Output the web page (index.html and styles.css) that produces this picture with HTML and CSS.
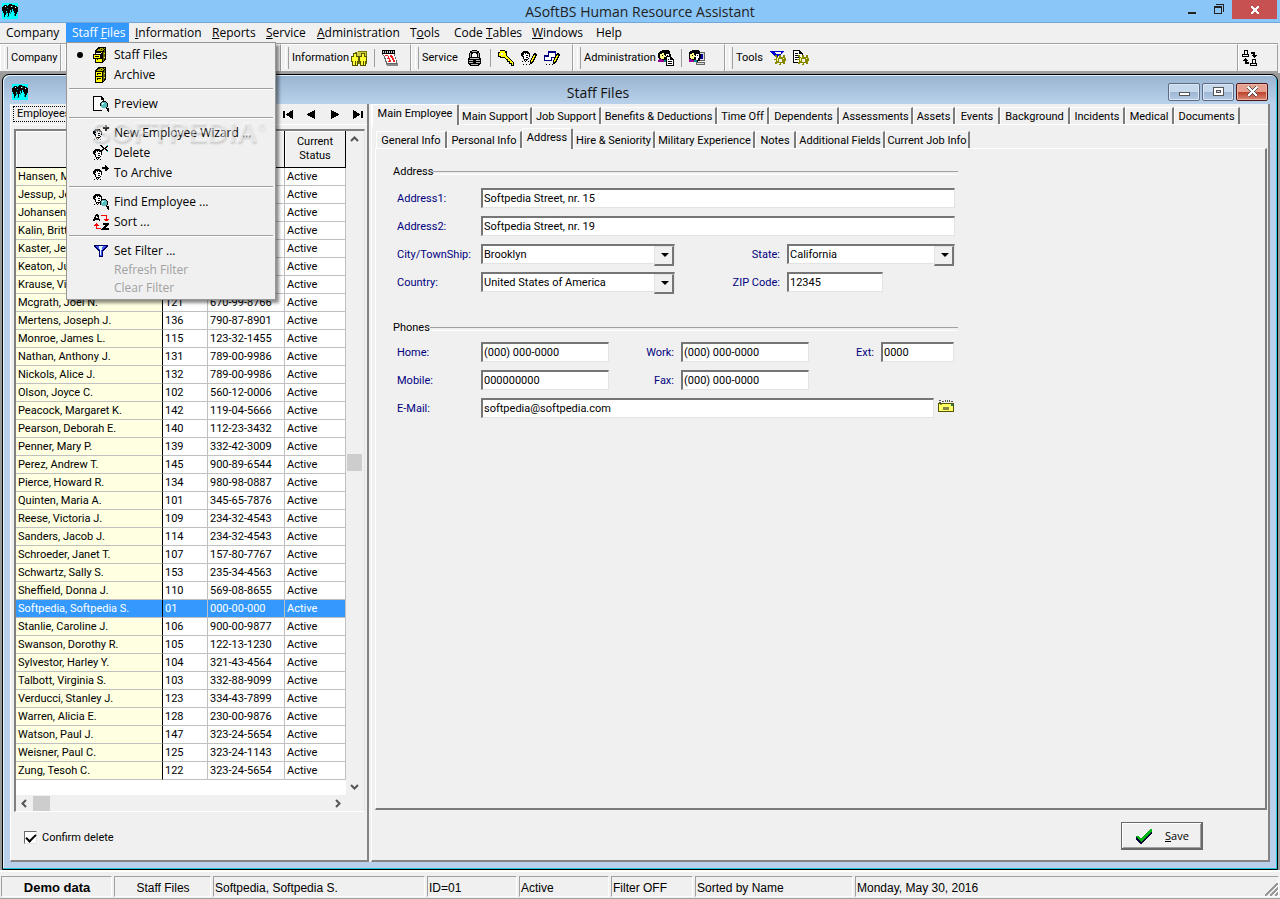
FILE: index.html
```html
<!DOCTYPE html>
<html lang="en">
<head>
<meta charset="utf-8">
<title>ASoftBS Human Resource Assistant</title>
<link rel="stylesheet" href="styles.css">
</head>
<body>
<svg class="defs" aria-hidden="true">
  <symbol id="i-people" viewBox="0 0 16 16"><path fill="#0ff" d="M0 0h16v16H0z"/><path d="M1 3h1V2h3v1h1V2h1V1h3v1h3v1h2v1h1v5h-1v2h-1v2h-1v-3h-1V8h-1V6h-1v3H9V7H8v3H7v3H6v-3H5V8H4v4H3v2H2v-4H1V8H0V4h1z"/><path fill="#088" d="M5 13h2v1H5zM4 9h1v2H4zM12 11h1v2h-1zM8 9h1v2H8zM10 3h1v1h-1zM5 5h1v1H5z"/><path fill="#fff" d="M3 3h1v1H3zM9 3h1v1H9zM13 4h1v1h-1z"/></symbol>
  <symbol id="i-cabinet" viewBox="0 0 16 16"><path d="M2 4l3-4h8v12l-3 4H2z"/><path fill="#ff0" d="M3 5h6v10H3z"/><path fill="#aa0" d="M4 3h1V2h1V1h6v1h-1v1h-1v1H4z"/><path fill="#660" d="M10 5h1V3h1v9h-1v2h-1z"/><path fill="#000" d="M6 1h1v1H6zM8 2h1v1H8zM10 1h1v1h-1zM3 9h6v1H3zM4 6h4v1H4zM4 6h1v2H4zM4 11h4v1H4zM4 11h1v2H4z"/><path fill="#ff0" d="M11 6h1v1h-1zM11 10h1v1h-1z"/></symbol>
  <symbol id="i-cabinet-open" viewBox="0 0 16 16"><use href="#i-cabinet"/><path d="M0 7h2V5h6v1h1v6H0z"/><path fill="#ff0" d="M1 8h6v3H1z"/><path fill="#fff" d="M3 6h5v1H3z"/><path d="M2 9h4v1H2z"/></symbol>
  <symbol id="i-lens" viewBox="0 0 16 16"><path d="M9 5h4v1h1v1h1v4h-1v1h2v2h-2v-1h-1v-1H9v-1H8v-1H7V7h1V6h1z"/><path fill="#5bb" d="M9 6h4v1h1v4h-1v1H9v-1H8V7h1z"/><path fill="#cff" d="M9 7h2v1h-1v1H9z"/><path d="M14 13h1v1h1v2h-1v-1h-1z"/></symbol>
  <symbol id="i-preview" viewBox="0 0 16 16"><path d="M0 0h9v1h1v1h1v3h-1V4H8V1H1v13h8v1H0z"/><path fill="#fff" d="M1 1h7v3h2v3H1zM1 7h6v7H1z"/><use href="#i-lens"/></symbol>
  <symbol id="i-head" viewBox="0 0 16 16"><path fill="#fff" d="M3 6h5v6H3z"/><path d="M2 4h5v1H2zM1 5h7v1H1zM0 6h3v1H0zM4 6h1v1H4zM6 6h3v1H6zM0 7h3v1H0zM8 7h1v2H8zM0 8h2v1H0zM5 8h2v1H5zM1 9h2v1H1zM8 9h1v1H8zM2 10h1v2H2zM5 10h2v1H5zM7 11h1v1H7zM3 12h4v1H3zM3 13h1v1H3zM5 13h1v1H5zM1 14h1v1H1zM4 14h1v1H4zM7 14h1v1H7z"/></symbol>
  <symbol id="i-new" viewBox="0 0 16 16"><use href="#i-head"/><path fill="#333" d="M12 0h2v2h2v2h-2v2h-2V4h-2V2h2z"/></symbol>
  <symbol id="i-delete" viewBox="0 0 16 16"><use href="#i-head"/><path d="M7 0h2v1h1v1h1v1h1V2h1V1h2v1h-1v1h-1v1h1v1h1v1h-2V5h-1V4h-1v1h-1v1H8V5h1V4h1V3H9V2H8V1H7z"/><path fill="#0cc" d="M14 0h1v1h-1zM14 6h1v1h-1z"/></symbol>
  <symbol id="i-move" viewBox="0 0 16 16"><use href="#i-head"/><path d="M9 2h3V0h1v1h1v1h1v1h1v1h-1v1h-1v1h-2V4H9z"/></symbol>
  <symbol id="i-find" viewBox="0 0 16 16"><use href="#i-head" y="-4"/><use href="#i-lens"/></symbol>
  <symbol id="i-sort" viewBox="0 0 16 16"><path fill="none" stroke="#000" stroke-width="1.5" d="M.5 7L3.500.5h1L6.500 7M1 5h5M10 10h5l-5 5h6"/><path fill="none" stroke="red" d="M8 1.500h5.500V7M11 5h5M12 6h3M8 14.500H3.500V9M1 11h5M2 10h3"/></symbol>
  <symbol id="i-funnel" viewBox="0 0 16 16"><path fill="#000060" d="M1 2h14v2h-1v1h-1v1h-1v1h-1v1h-1v6H6V8H5V7H4V6H3V5H2V4H1z"/><path fill="#45f" d="M3 3h10v1h-1v1h-1v1h-1v1H9v6H7V7H6V6H5V5H4V4H3z"/><path fill="#dff" d="M6 3h4v1H9v3H8v5H7V6H6z"/></symbol>
  <symbol id="i-gear" viewBox="0 0 16 16"><path fill="#880" d="M9 5h2v2h2V5h2v3h1v3h-1v3h-2v-1h-2v2H9v-2H7v1H5v-2h1v-2H4V9h2V7H5V5h2v2h2z"/><path fill="#ff8" d="M8 7h1v1H8zM7 8h1v3H7zM9 13h1v1H9zM13 8h1v1h-1z"/><path fill="#eee" d="M9 9h3v3H9z"/></symbol>
  <symbol id="i-filtergear" viewBox="0 0 16 16"><path fill="#00c" d="M0 1h14v1h-1v1h-1v1h-1v2H8v2H6V6H4V5H3V4H2V3H1V2H0z"/><path fill="#fff" d="M5 2h6v2H6z"/><use href="#i-gear"/></symbol>
  <symbol id="i-docgear" viewBox="0 0 16 16"><path d="M0 0h7v1h1v1h1v1h1v10H0z"/><path fill="#fff" d="M1 1h5v3h3v8H1z"/><path d="M2 3h3v1H2zM2 5h5v1H2zM2 7h5v1H2zM2 9h5v1H2z"/><use href="#i-gear"/></symbol>
  <symbol id="i-group" viewBox="0 0 16 16"><path fill="#770" d="M4 2h3V1h9v13H6V8H4z"/><path fill="#cc4" d="M6 2h9v8H6z"/><path fill="#550" d="M2 3h4v3h2v6H7v4H1v-4H0V6h2zM10 3h4v3h2v6h-1v4H9v-4H8V6h2z"/><path fill="#ff3" d="M3 4h2v3h2v4H6v4H5v-4H4v4H2v-4H1V7h2zM11 4h2v3h2v4h-1v4h-1v-4h-1v4h-2v-4H9V7h2z"/></symbol>
  <symbol id="i-cal" viewBox="0 0 16 16"><path fill="#888" d="M4 13h12v3H5v-1H4z"/><path d="M0 0h13v4H0z"/><path fill="#666" d="M0 4h13v3h1v3h1v4H4v-2H3V9H2V6H1V5H0z"/><path fill="#fff" d="M1 4h11v2h1v3h1v4H5v-2H4V8H3V6H2V5H1z"/><path fill="#ccc" d="M1 1h1v2H1zM3 1h1v2H3zM5 1h1v2H5zM7 1h1v2H7zM9 1h1v2H9zM11 1h1v2h-1z"/><path fill="#e22" d="M3 5h3v1h1v2h1v2h1v2H6v-1h1V9H5V8h1V6H3zM8 5h2v1h1v2h1v2h1v2h-2v-2h-1V8H9V7H8z"/></symbol>
  <symbol id="i-lock" viewBox="0 0 16 16"><path fill-rule="evenodd" d="M5 0h5v1h2v2h1v4H2V3h1V1h2zM6 3v1H5v3h5V4H9V3z"/><path fill="#aaa" d="M5 1h5v1H5zM3 3h1v4H3zM11 3h1v4h-1z"/><path d="M2 7h11v1h1v6h-1v1h-1v1H3v-1H2v-1H1V8h1z"/><path fill="#bbb" d="M3 8h9v1H3zM2 10h4v1H2zM9 10h4v1H9zM2 12h4v1H2zM9 12h4v1H9zM4 14h7v1H4z"/></symbol>
  <symbol id="i-key" viewBox="0 0 16 16"><path d="M2 0h5v1h2v5l7 7v3h-3v-2h-2v-2H9v-2H8L6 8H2V7H0V2h2z"/><path fill="#ff0" d="M2 1h5v2h1v3l7 7v2h-1v-2h-2v-2h-2V9H8L6 7H3V6H1V3h1z"/><path fill="#eee" d="M3 3h2v2H3z"/></symbol>
  <symbol id="i-pen" viewBox="0 0 16 16"><path d="M13 3h2v1h1v2h-1v2h-1v2h-1v2h-1v1h-1v1H9v-4h1V8h1V6h1V4h1z"/><path fill="#ff0" d="M13 5h1v2h-1v2h-1v2h-1v1h-1v-2h1V8h1V6h1z"/><path d="M2 14h1v1H2zM5 14h1v1H5zM8 14h1v1H8z"/></symbol>
  <symbol id="i-headpen" viewBox="0 0 16 16"><use href="#i-head" y="-3"/><use href="#i-pen"/></symbol>
  <symbol id="i-winpen" viewBox="0 0 16 16"><path fill="#000080" d="M4 1h8v7H4zM0 5h8v6H0z"/><path fill="#fff" d="M5 3h6v4H5zM1 7h6v3H1z"/><use href="#i-pen"/></symbol>
  <symbol id="i-faces" viewBox="0 0 16 16"><path d="M2 1h2V0h7v1h1v3h1v4h-1v3h-2v1H1v-2h1V9H1V8H0V3h1V2h1z"/><path fill="#ff8" d="M2 4h2V3h2v2h1v2H6v2H3V8H2z"/><path d="M4 5h1v1H4z"/><path fill="#fff" d="M8 4h3v4h-1v2H8V7H7V6h1z"/><path d="M9 5h1v1H9z"/><path fill="#909" d="M1 9h3v1h2v2H0v-2h1z"/><path fill="#088" d="M6 10h3v2H6z"/></symbol>
  <symbol id="i-facesdoc" viewBox="0 0 16 16"><use href="#i-faces"/><path d="M8 6h5v1h1v1h1v1h1v7H8z"/><path fill="#fff" d="M9 7h3v3h3v5H9z"/><path d="M10 9h1v1h-1zM10 11h4v1h-4zM10 13h4v1h-4z"/></symbol>
  <symbol id="i-facespc" viewBox="0 0 16 16"><path fill="#666" d="M8 2h8v9H8zM7 12h9v3H7z"/><path fill="#ddd" d="M9 3h6v7H9zM8 13h7v1H8z"/><path fill="#009" d="M11 4h3v5h-3z"/><use href="#i-faces" x="-1"/></symbol>
  <symbol id="i-swap" viewBox="0 0 16 16"><path fill-rule="evenodd" d="M2 0h4v4h1v3H0V4h2zM3 1v3h2V1zM1 5v1h5V5zM10 9h4v4h1v3H8v-3h2zM11 10v3h2v-3zM9 14v1h5v-1z"/><path d="M9 2h4v3h2v1h-1v1h-1v1h-1V7h-1V6h-1V5h1V4H9zM3 8h1v1h1v1h1v1H5v1h2v2H3v-3H1v-1h1V9h1z"/></symbol>
  <symbol id="i-mail" viewBox="0 0 16 12"><path d="M1 0h2v1H1zM4 1h2v1H4zM7 0h1v2H7zM9 0h1v2H9zM11 0h1v2h-1zM13 1h2v1h-2zM1 2h2v1H1z" fill="#555"/><path fill="#550" d="M0 3h16v9H0z"/><path fill="#ff6" d="M1 4h14v7H1z"/><path fill="#884" d="M5 7h6v3H5zM2 4h2v1H2z"/><path fill="#276" d="M13 4h2v2h-2z"/></symbol>
  <symbol id="i-check" viewBox="0 0 16 16"><path fill="#003" d="M16 3v2L6 16H4L0 11V9l5 4z"/><path fill="#00b414" d="M0 8h2l3 3L14 1h2v2L5 14 0 9z"/></symbol>
</svg>

<div class="app">
  <header class="titlebar">
    <svg class="icon"><use href="#i-people"/></svg>
    <h1 class="title">ASoftBS Human Resource Assistant</h1>
    <div class="win-buttons">
      <button class="win-btn" aria-label="Minimize"><svg width="10" height="12" viewBox="0 0 10 12"><path fill="#222" d="M1 9h8v2H1z"/></svg></button>
      <button class="win-btn" aria-label="Restore"><svg width="10" height="12" viewBox="0 0 10 12"><path fill="#222" fill-rule="evenodd" d="M2 1h8v8H9V2H2zM0 3h8v8H0zM1 5v5h6V5z"/></svg></button>
      <button class="win-btn win-close" aria-label="Close"><svg width="8" height="8" viewBox="0 0 8 8"><path stroke="#fff" stroke-width="2" d="M0 0l8 8M8 0L0 8"/></svg></button>
    </div>
  </header>

  <nav class="menubar">
    <button>Company</button><button class="open">Staff <u>F</u>iles</button><button><u>I</u>nformation</button><button><u>R</u>eports</button><button><u>S</u>ervice</button><button><u>A</u>dministration</button><button>T<u>o</u>ols</button><button>Code <u>T</u>ables</button><button><u>W</u>indows</button><button>Help</button>
    <div class="menu">
      <button class="item"><i class="bullet"></i><svg class="icon"><use href="#i-cabinet-open"/></svg>Staff Files</button>
      <button class="item"><i></i><svg class="icon"><use href="#i-cabinet"/></svg>Archive</button>
      <hr>
      <button class="item"><i></i><svg class="icon"><use href="#i-preview"/></svg>Preview</button>
      <hr>
      <button class="item"><i></i><svg class="icon"><use href="#i-new"/></svg>New Employee Wizard ...</button>
      <button class="item"><i></i><svg class="icon"><use href="#i-delete"/></svg>Delete</button>
      <button class="item"><i></i><svg class="icon"><use href="#i-move"/></svg>To Archive</button>
      <hr>
      <button class="item"><i></i><svg class="icon"><use href="#i-find"/></svg>Find Employee ...</button>
      <button class="item"><i></i><svg class="icon"><use href="#i-sort"/></svg>Sort ...</button>
      <hr>
      <button class="item"><i></i><svg class="icon"><use href="#i-funnel"/></svg>Set Filter ...</button>
      <button class="item plain" disabled>Refresh Filter</button>
      <button class="item plain" disabled>Clear Filter</button>
      <div class="watermark">SOFTPEDIA<sup>®</sup></div>
    </div>
  </nav>

  <div class="toolbar">
    <div class="group g-company"><span>Company</span></div>
    <div class="group g-staff"></div>
    <div class="group g-info"><span>Information</span>
      <button class="tool" aria-label="Employee information"><svg class="icon"><use href="#i-group"/></svg></button><b class="sep"></b>
      <button class="tool" aria-label="Calendar"><svg class="icon"><use href="#i-cal"/></svg></button></div>
    <div class="group g-service"><span>Service</span>
      <button class="tool" aria-label="Lock"><svg class="icon"><use href="#i-lock"/></svg></button><b class="sep"></b>
      <button class="tool" aria-label="Password"><svg class="icon"><use href="#i-key"/></svg></button>
      <button class="tool" aria-label="Edit employee"><svg class="icon"><use href="#i-headpen"/></svg></button>
      <button class="tool" aria-label="Edit windows"><svg class="icon"><use href="#i-winpen"/></svg></button></div>
    <div class="group g-admin"><span>Administration</span>
      <button class="tool" aria-label="User records"><svg class="icon"><use href="#i-facesdoc"/></svg></button><b class="sep"></b>
      <button class="tool" aria-label="User sessions"><svg class="icon"><use href="#i-facespc"/></svg></button></div>
    <div class="group g-tools"><span>Tools</span>
      <button class="tool" aria-label="Filter setup"><svg class="icon"><use href="#i-filtergear"/></svg></button>
      <button class="tool" aria-label="Report setup"><svg class="icon"><use href="#i-docgear"/></svg></button></div>
    <div class="g-last"><button class="tool" aria-label="Switch"><svg class="icon"><use href="#i-swap"/></svg></button></div>
  </div>

  <main class="mdi">
    <section class="child">
      <header class="child-title">
        <svg class="icon"><use href="#i-people"/></svg>
        <h2 class="title">Staff Files</h2>
        <div class="child-buttons">
          <button class="cbtn" aria-label="Minimize window"><svg width="13" height="13" viewBox="0 0 13 13"><path fill="#fff" stroke="#555" d="M1.500 7.500h10v3h-10z"/></svg></button>
          <button class="cbtn" aria-label="Maximize window"><svg width="13" height="13" viewBox="0 0 13 13"><path fill="#fff" stroke="#555" fill-rule="evenodd" d="M1.500 2.500h10v8h-10zM4.500 5.500v2h4v-2z"/></svg></button>
          <button class="cbtn cclose" aria-label="Close window"><svg width="13" height="13" viewBox="0 0 13 13"><path stroke="#555" stroke-width="4" d="M2 2l9 9M11 2l-9 9"/><path stroke="#fff" stroke-width="2" d="M2 2l9 9M11 2l-9 9"/></svg></button>
        </div>
      </header>

      <div class="client">
        <section class="left">
          <div class="left-head">
            <button class="emp-tab">Employees</button>
            <div class="navs">
              <button aria-label="First"><svg width="11" height="9" viewBox="0 0 11 9"><path d="M0 1h2v7H0zM10 0v9L3 5V4z"/></svg></button>
              <button aria-label="Previous"><svg width="9" height="9" viewBox="0 0 9 9"><path d="M8 0v9L0 5V4z"/></svg></button>
              <button aria-label="Next"><svg width="9" height="9" viewBox="0 0 9 9"><path d="M1 0v9l8-4V4z"/></svg></button>
              <button aria-label="Last"><svg width="11" height="9" viewBox="0 0 11 9"><path d="M9 1h2v7H9zM1 0v9l7-4V4z"/></svg></button>
            </div>
          </div>
          <div class="left-page">
            <div class="grid-box">
              <div class="grid-view">
                <table class="emps">
                  <colgroup><col class="c-name"><col class="c-id"><col class="c-ssn"><col class="c-status"></colgroup>
                  <thead><tr><th></th><th></th><th></th><th>Current Status</th></tr></thead>
                  <tbody>
                    <tr><td>Hansen, M</td><td></td><td></td><td>Active</td></tr>
                    <tr><td>Jessup, Je</td><td></td><td></td><td>Active</td></tr>
                    <tr><td>Johansen,</td><td></td><td></td><td>Active</td></tr>
                    <tr><td>Kalin, Britta</td><td></td><td></td><td>Active</td></tr>
                    <tr><td>Kaster, Jer</td><td></td><td></td><td>Active</td></tr>
                    <tr><td>Keaton, Ju</td><td></td><td></td><td>Active</td></tr>
                    <tr><td>Krause, Vi</td><td></td><td></td><td>Active</td></tr>
                    <tr><td>Mcgrath, Joel N.</td><td>121</td><td>670-99-8766</td><td>Active</td></tr>
                    <tr><td>Mertens, Joseph J.</td><td>136</td><td>790-87-8901</td><td>Active</td></tr>
                    <tr><td>Monroe, James L.</td><td>115</td><td>123-32-1455</td><td>Active</td></tr>
                    <tr><td>Nathan, Anthony J.</td><td>131</td><td>789-00-9986</td><td>Active</td></tr>
                    <tr><td>Nickols, Alice J.</td><td>132</td><td>789-00-9986</td><td>Active</td></tr>
                    <tr><td>Olson, Joyce C.</td><td>102</td><td>560-12-0006</td><td>Active</td></tr>
                    <tr><td>Peacock, Margaret K.</td><td>142</td><td>119-04-5666</td><td>Active</td></tr>
                    <tr><td>Pearson, Deborah E.</td><td>140</td><td>112-23-3432</td><td>Active</td></tr>
                    <tr><td>Penner, Mary P.</td><td>139</td><td>332-42-3009</td><td>Active</td></tr>
                    <tr><td>Perez, Andrew T.</td><td>145</td><td>900-89-6544</td><td>Active</td></tr>
                    <tr><td>Pierce, Howard R.</td><td>134</td><td>980-98-0887</td><td>Active</td></tr>
                    <tr><td>Quinten, Maria A.</td><td>101</td><td>345-65-7876</td><td>Active</td></tr>
                    <tr><td>Reese, Victoria J.</td><td>109</td><td>234-32-4543</td><td>Active</td></tr>
                    <tr><td>Sanders, Jacob J.</td><td>114</td><td>234-32-4543</td><td>Active</td></tr>
                    <tr><td>Schroeder, Janet T.</td><td>107</td><td>157-80-7767</td><td>Active</td></tr>
                    <tr><td>Schwartz, Sally S.</td><td>153</td><td>235-34-4563</td><td>Active</td></tr>
                    <tr><td>Sheffield, Donna J.</td><td>110</td><td>569-08-8655</td><td>Active</td></tr>
                    <tr class="selected"><td>Softpedia, Softpedia S.</td><td>01</td><td>000-00-000</td><td>Active</td></tr>
                    <tr><td>Stanlie, Caroline J.</td><td>106</td><td>900-00-9877</td><td>Active</td></tr>
                    <tr><td>Swanson, Dorothy R.</td><td>105</td><td>122-13-1230</td><td>Active</td></tr>
                    <tr><td>Sylvestor, Harley Y.</td><td>104</td><td>321-43-4564</td><td>Active</td></tr>
                    <tr><td>Talbott, Virginia S.</td><td>103</td><td>332-88-9099</td><td>Active</td></tr>
                    <tr><td>Verducci, Stanley J.</td><td>123</td><td>334-43-7899</td><td>Active</td></tr>
                    <tr><td>Warren, Alicia E.</td><td>128</td><td>230-00-9876</td><td>Active</td></tr>
                    <tr><td>Watson, Paul J.</td><td>147</td><td>323-24-5654</td><td>Active</td></tr>
                    <tr><td>Weisner, Paul C.</td><td>125</td><td>323-24-1143</td><td>Active</td></tr>
                    <tr><td>Zung, Tesoh C.</td><td>122</td><td>323-24-5654</td><td>Active</td></tr>
                  </tbody>
                </table>
              </div>
              <div class="vscroll">
                <svg class="arrow" viewBox="0 0 9 9"><path d="M1 6l3.500-3.500L8 6"/></svg>
                <div class="vtrack"><div class="thumb"></div></div>
                <svg class="arrow" viewBox="0 0 9 9"><path d="M1 3l3.500 3.500L8 3"/></svg>
              </div>
              <div class="hscroll">
                <svg class="arrow" viewBox="0 0 9 9"><path d="M6 1L2.500 4.500 6 8"/></svg>
                <div class="htrack"><div class="thumb"></div></div>
                <svg class="arrow" viewBox="0 0 9 9"><path d="M3 1l3.500 3.500L3 8"/></svg>
              </div>
            </div>
            <label class="confirm"><input type="checkbox" checked>Confirm delete</label>
          </div>
        </section>

        <section class="right">
          <div class="tabs main-tabs">
            <button class="tab on">Main Employee</button><button class="tab">Main Support</button><button class="tab">Job Support</button><button class="tab">Benefits &amp; Deductions</button><button class="tab">Time Off</button><button class="tab">Dependents</button><button class="tab">Assessments</button><button class="tab">Assets</button><button class="tab">Events</button><button class="tab">Background</button><button class="tab">Incidents</button><button class="tab">Medical</button><button class="tab">Documents</button>
          </div>
          <div class="main-page">
            <div class="tabs sub-tabs">
              <button class="tab">General Info</button><button class="tab">Personal Info</button><button class="tab on">Address</button><button class="tab">Hire &amp; Seniority</button><button class="tab">Military Experience</button><button class="tab">Notes</button><button class="tab">Additional Fields</button><button class="tab">Current Job Info</button>
            </div>
            <form class="sub-page">
              <fieldset>
                <legend>Address</legend>
                <div class="row wide"><label for="a1">Address1:</label><input id="a1" type="text" value="Softpedia Street, nr. 15"></div>
                <div class="row wide"><label for="a2">Address2:</label><input id="a2" type="text" value="Softpedia Street, nr. 19"></div>
                <div class="row pair"><label for="city">City/TownShip:</label>
                  <span class="combo"><select id="city"><option>Brooklyn</option></select></span>
                  <label for="state" class="r">State:</label>
                  <span class="combo"><select id="state"><option>California</option></select></span></div>
                <div class="row pair"><label for="country">Country:</label>
                  <span class="combo"><select id="country"><option>United States of America</option></select></span>
                  <label for="zip" class="r">ZIP Code:</label><input id="zip" class="zip" type="text" value="12345"></div>
              </fieldset>
              <fieldset class="compact">
                <legend>Phones</legend>
                <div class="row phones"><label for="home">Home:</label><input id="home" type="text" value="(000) 000-0000">
                  <label for="work" class="r">Work:</label><input id="work" type="text" value="(000) 000-0000">
                  <label for="ext" class="r">Ext:</label><input id="ext" type="text" value="0000"></div>
                <div class="row phones"><label for="mobile">Mobile:</label><input id="mobile" type="text" value="000000000">
                  <label for="fax" class="r">Fax:</label><input id="fax" type="text" value="(000) 000-0000"></div>
                <div class="row mail"><label for="mail">E-Mail:</label><input id="mail" type="text" value="softpedia@softpedia.com">
                  <button type="button" class="tool" aria-label="Send e-mail"><svg width="16" height="12"><use href="#i-mail"/></svg></button></div>
              </fieldset>
            </form>
            <div class="actions"><button class="save"><svg class="icon"><use href="#i-check"/></svg><span><u>S</u>ave</span></button></div>
          </div>
        </section>
      </div>
    </section>
  </main>

  <footer class="status">
    <div class="cell demo">Demo data</div>
    <div class="cell center">Staff Files</div>
    <div class="cell">Softpedia, Softpedia S.</div>
    <div class="cell">ID=01</div>
    <div class="cell">Active</div>
    <div class="cell">Filter OFF</div>
    <div class="cell">Sorted by Name</div>
    <div class="cell last"><span>Monday, May 30, 2016</span>
      <svg class="grip" width="13" height="13" viewBox="0 0 13 13"><path stroke="#999" stroke-width="2" d="M0 13L13 0M5 13l8-8M10 13l3-3"/></svg></div>
  </footer>
</div>
</body>
</html>
```
FILE: styles.css
```css
* { box-sizing: border-box; }
body { margin: 0; background: #f0f0f0; color: #000; font: 11px/14px Roboto, "Liberation Sans", sans-serif; }
button, input, select { font: inherit; color: inherit; margin: 0; padding: 0; border: 0; border-radius: 0; background: none; }
.defs { position: absolute; width: 0; height: 0; }
.icon { width: 16px; height: 16px; flex: none; display: block; }
svg { shape-rendering: crispEdges; }
h1, h2 { margin: 0; font-weight: 400; }
.title { flex: 1; text-align: center; font: 14px/20px "Open Sans", sans-serif; color: #222; }

.app { display: flex; flex-direction: column; min-height: 100vh; }

.titlebar { display: flex; height: 23px; padding-left: 2px; background: #8bc6f9; border-bottom: 1px solid #74a6d8; }
.titlebar .icon { margin-top: 3px; }
.titlebar .title { line-height: 24px; padding-left: 84px; }
.win-buttons { display: flex; margin-right: 3px; }
.win-btn { width: 27px; height: 19px; display: flex; align-items: center; justify-content: center; padding-bottom: 2px; }
.win-close { width: 45px; background: #c75050; padding: 0; }

.menubar { position: relative; z-index: 5; height: 20px; display: grid; grid-template-columns: 66px 63px 77px 54px 51px 93px 44px 78px 64px 38px; font: 12px/18px "Open Sans", sans-serif; }
.menubar > button { text-align: left; padding: 0 0 1px 6px; white-space: nowrap; }
.menubar > .open { background: #3399ff; color: #fff; }
.menu { position: absolute; left: 66px; top: 19px; width: 210px; background: #f0f0f0; border: 1px solid #979797; padding: 2px; box-shadow: 3px 3px 3px rgba(0,0,0,.45); display: flex; flex-direction: column; }
.item { display: flex; align-items: center; height: 20px; text-align: left; gap: 5px; white-space: nowrap; }
.item i { width: 19px; display: flex; flex: none; }
.item .bullet::before { content: ""; width: 6px; height: 6px; border-radius: 50%; background: #000; margin-left: 8px; }
.item.plain { height: 18px; padding-left: 45px; color: #a0a0a0; }
.menu hr { width: 100%; height: 2px; margin: 3px 0 4px; border: 0; border-top: 1px solid #a0a0a0; border-bottom: 1px solid #fff; }
.watermark { position: absolute; left: 24px; top: 73px; font: bold 29px/32px "Liberation Sans", sans-serif; color: rgba(255,255,255,.45); text-shadow: 1px 2px 2px rgba(0,0,0,.14); pointer-events: none; }
.watermark sup { font-size: 11px; line-height: 11px; vertical-align: 12px; font-weight: 400; }

.toolbar { display: grid; grid-template-columns: 61px 220px 130px 162px 152px 1fr 40px; height: 30px; border-top: 1px solid #a0a0a0; border-bottom: 2px solid #a0a0a0; margin-right: 2px; background: #f0f0f0; }
.group, .g-last { display: flex; align-items: center; gap: 7px; border-top: 1px solid #fff; border-right: 1px solid #a0a0a0; border-left: 1px solid #fff; padding-left: 3px; }
.group::before { content: ""; width: 2px; height: 22px; border-right: 1px solid #a0a0a0; border-left: 1px solid #fff; margin-right: -4px; }
.g-info span, .g-admin span { margin-right: -5px; }
.g-service span { margin-right: 2px; }
.tool { display: block; width: 16px; }
.sep { width: 1px; height: 18px; background: #a0a0a0; }

.mdi { flex: 1; display: flex; padding: 1px 2px 0; background: #9a9a9a; }
.child { flex: 1; display: flex; flex-direction: column; border: 1px solid #000; border-radius: 7px 7px 0 0; padding: 0 7px 7px; background: linear-gradient(#99b4d1, #b9d1ea 29px); box-shadow: inset -1px -1px 0 #29c5dd, inset 1px 1px 0 #e8f2fa; }
.child-title { display: flex; height: 29px; align-items: center; }
.child-title .icon { margin: 4px 0 0 2px; }
.child-title .title { padding-top: 6px; color: #111; }
.child-buttons { display: flex; gap: 2px; padding: 4px 2px 0 0; }
.cbtn { width: 32px; height: 18px; display: flex; align-items: center; justify-content: center; border: 1px solid #5b6b85; border-radius: 2px; background: linear-gradient(#c6d8ec 50%, #9db6d2 50%, #b3cae4); box-shadow: inset 0 0 0 1px #dbe7f4; }
.cclose { border-color: #4d1414; background: linear-gradient(#e6a090 50%, #bf4026 50%, #d68a78); box-shadow: inset 0 0 0 1px #edb5a8; }

.client { flex: 1; display: grid; grid-template-columns: 359px 1fr; gap: 2px; background: #f0f0f0; }
.left, .right { display: flex; flex-direction: column; border-left: 1px solid #fff; border-right: 2px solid #848484; border-bottom: 2px solid #848484; }
.left-head { display: flex; justify-content: space-between; height: 20px; }
.emp-tab { margin: 2px; width: 70px; border: 1px dotted #000; text-align: left; padding-left: 3px; }
.navs { display: flex; margin-right: -2px; }
.navs button { width: 23px; display: flex; align-items: center; justify-content: center; }
.left-page { flex: 1; display: flex; flex-direction: column; border-top: 1px solid #fff; padding: 4px 2px 0 3px; }
.grid-box { flex: 1; display: grid; grid-template-columns: 1fr 18px; grid-template-rows: 1fr 16px; border: solid; border-width: 2px 1px 1px 2px; border-color: #808080 #e3e3e3 #fff #808080; }
.grid-view { background: #fff; }
.emps { table-layout: fixed; width: 330px; border-collapse: separate; border-spacing: 0; }
.c-name { width: 147px; } .c-id { width: 45px; } .c-ssn { width: 77px; } .c-status { width: 61px; }
.emps th { height: 37px; padding: 0 10px; font-weight: 400; background: #f0f0f0; border-right: 1px solid #000; border-bottom: 1px solid #000; box-shadow: inset 1px 1px 0 #fff; }
.emps td { height: 18px; padding: 1px 0 0 2px; line-height: 16px; border-right: 1px solid #c0c0c0; border-bottom: 1px solid #c0c0c0; white-space: nowrap; overflow: hidden; background: #fff; }
.emps td:first-child { background: #ffffe1; border-right-color: #000; }
.emps .selected td, .emps .selected td:first-child { background: #3399ff; color: #fff; }
.vscroll { display: flex; flex-direction: column; align-items: center; padding: 4px 1px 4px 0; }
.arrow { width: 9px; height: 9px; flex: none; fill: none; stroke: #555; stroke-width: 2; shape-rendering: auto; }
.vtrack { flex: 1; width: 15px; padding-top: 310px; }
.thumb { background: #cdcdcd; height: 17px; }
.hscroll { display: flex; align-items: center; padding: 0 4px; }
.htrack { flex: 1; padding-left: 4px; }
.htrack .thumb { width: 17px; height: 15px; }
.confirm { display: flex; align-items: center; gap: 5px; height: 48px; padding: 3px 0 0 10px; }
.confirm input { appearance: none; width: 13px; height: 13px; background: #fff; border: 1px solid; border-color: #696969 #e3e3e3 #e3e3e3 #696969; display: flex; align-items: center; justify-content: center; }
.confirm input:checked::before { content: ""; width: 8px; height: 4px; border-left: 2px solid #000; border-bottom: 2px solid #000; transform: translateY(-1px) rotate(-45deg); }

.tabs { display: grid; align-items: end; height: 20px; }
.main-tabs { grid-template-columns: 87px 73px 69px 116px 52px 70px 74px 42px 45px 70px 55px 49px 66px; }
.sub-tabs { grid-template-columns: 71px 75px 51px 82px 100px 41px 89px 85px; padding-left: 1px; }
.tab { height: 17px; padding-top: 1px; line-height: 14px; white-space: nowrap; border-top: 1px solid #fff; border-left: 1px solid #fff; border-right: 2px solid #7c7c7c; }
.tab.on { height: 21px; margin-bottom: -1px; background: #f0f0f0; padding: 0 0 2px; border-radius: 2px 2px 0 0; position: relative; }
.main-page { flex: 1; display: flex; flex-direction: column; border-top: 1px solid #fff; padding: 3px 1px 0 3px; }
.sub-page { flex: 1; border: solid; border-width: 1px 2px 2px 1px; border-color: #fff #7c7c7c #7c7c7c #fff; padding: 15px 17px; }
fieldset { margin: 0 0 20px; padding: 0; border: 0; max-width: 565px; min-width: 0; }
legend { display: flex; width: 100%; padding: 0; height: 16px; align-items: center; margin-bottom: 8px; }
.compact legend { margin-bottom: 6px; }
legend::after { content: ""; flex: 1; height: 2px; border-top: 1px solid #a0a0a0; border-bottom: 1px solid #fff; margin-top: 2px; }
.row { display: grid; align-items: center; height: 20px; margin: 0 0 8px 4px; color: #000080; }
.row label { padding-top: 2px; }
.row .r { text-align: right; padding-right: 7px; }
.wide { grid-template-columns: 84px 474px; }
.pair { grid-template-columns: 84px 194px 112px 168px; }
.phones { grid-template-columns: 84px 128px 72px 128px 72px 73px; }
.mail { grid-template-columns: 84px 453px 16px; }
.mail .tool { margin-left: 4px; }
.row input, .combo { width: 100%; height: 20px; background: #fff; border: solid; border-width: 2px 1px 1px 2px; border-color: #757575 #e3e3e3 #e3e3e3 #757575; color: #000; }
.row input { padding: 0 0 1px 1px; }
.row .zip { width: 96px; }
.combo { position: relative; display: block; }
.combo select { appearance: none; display: block; width: 100%; height: 17px; padding-left: 1px; }
.combo::before { content: ""; position: absolute; pointer-events: none; right: 0; top: 0; width: 17px; height: 17px; background: #f0f0f0; border: solid; border-width: 1px 2px 2px 1px; border-color: #e3e3e3 #757575 #757575 #e3e3e3; }
.combo::after { content: ""; position: absolute; pointer-events: none; right: 5px; top: 7px; border: 4px solid transparent; border-top-color: #000; border-bottom: 0; }
.actions { display: flex; justify-content: flex-end; padding: 12px 64px 10px 0; }
.save { display: flex; align-items: center; gap: 13px; width: 82px; height: 28px; padding-left: 14px; border: solid #696969; border-width: 1px 2px 2px 1px; box-shadow: inset 1px 1px 0 #fff, inset -1px -1px 0 #a0a0a0; font: 11px/14px "Open Sans", sans-serif; }

.status { display: grid; grid-template-columns: 111px 97px 212px 90px 90px 82px 158px 1fr; gap: 2px; height: 29px; padding: 4px 1px 1px; border-top: 2px solid #fff; border-bottom: 1px solid #a0a0a0; font: 12px/22px "Liberation Sans", sans-serif; }
.cell { border: 1px solid; border-color: #a0a0a0 #fff #fff #a0a0a0; padding-left: 1px; white-space: nowrap; overflow: hidden; }
.demo { font-weight: 700; font-size: 13px; text-align: center; }
.center { text-align: center; }
.last { display: flex; justify-content: space-between; }
.grip { align-self: flex-end; }
```
